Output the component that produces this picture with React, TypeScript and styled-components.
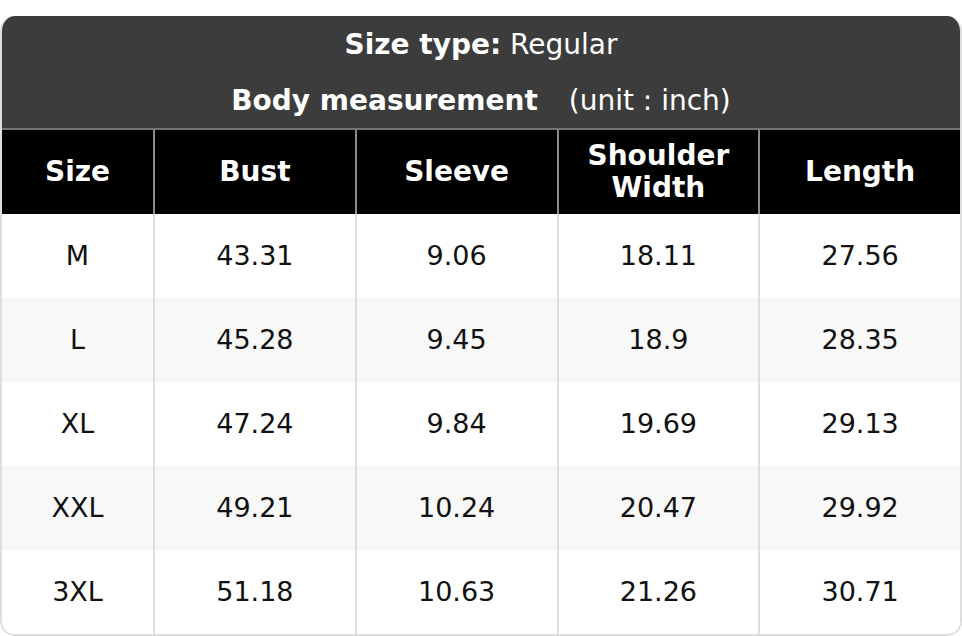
import React from "react";
import styled, { createGlobalStyle } from "styled-components";

const Global = createGlobalStyle`
  html, body { margin: 0; padding: 0; background: #ffffff; }
  body { font-family: "DejaVu Sans", "Liberation Sans", sans-serif; }
`;

const Page = styled.div`
  padding-top: 16px;
`;

const Card = styled.div`
  width: 962px;
  box-sizing: border-box;
  border-radius: 15px;
  overflow: hidden;
  border: 2px solid #dedede;
  border-top: none;
  background: #ffffff;
`;

const Banner = styled.div`
  background: #3c3c3c;
  color: #ffffff;
  display: flex;
  flex-direction: column;
  margin: 0 -2px;
`;

const BannerLine = styled.div`
  height: 56px;
  display: flex;
  align-items: center;
  justify-content: center;
  font-size: 28px;
  white-space: pre;
`;

const Strong = styled.span`
  font-weight: bold;
`;

const Unit = styled.span`
  margin-left: 31px;
`;

const Grid = styled.div`
  display: grid;
  grid-template-columns: 153px repeat(4, 1fr);
  border-top: 2px solid #747474;
  margin: 0 -2px 0 -2px;
  padding: 0 0 0 2px;
`;

const HeadCell = styled.div<{ $last?: boolean }>`
  background: #000000;
  color: #ffffff;
  font-weight: bold;
  font-size: 28px;
  line-height: 32px;
  height: 84px;
  display: flex;
  align-items: center;
  justify-content: center;
  text-align: center;
  border-right: 2px solid ${(p) => (p.$last ? "#dedede" : "#8a8a8a")};
  box-sizing: border-box;
`;

const Cell = styled.div<{ $alt: boolean; $last?: boolean }>`
  background: ${(p) => (p.$alt ? "#f8f8f8" : "#ffffff")};
  color: #111111;
  font-size: 27px;
  height: 84px;
  padding-bottom: 2px;
  display: flex;
  align-items: center;
  justify-content: center;
  border-right: 2px solid ${(p) => (p.$last ? "transparent" : "#dedede")};
  box-sizing: border-box;
`;

const headers = ["Size", "Bust", "Sleeve", "Shoulder\nWidth", "Length"];
const rows = [
  ["M", "43.31", "9.06", "18.11", "27.56"],
  ["L", "45.28", "9.45", "18.9", "28.35"],
  ["XL", "47.24", "9.84", "19.69", "29.13"],
  ["XXL", "49.21", "10.24", "20.47", "29.92"],
  ["3XL", "51.18", "10.63", "21.26", "30.71"],
];

const Lines = styled.span`
  white-space: pre-line;
`;

export default function App() {
  return (
    <Page>
      <Global />
      <Card>
        <Banner>
          <BannerLine>
            <Strong>Size type:</Strong> Regular
          </BannerLine>
          <BannerLine>
            <Strong>Body measurement</Strong>
            <Unit>(unit : inch)</Unit>
          </BannerLine>
        </Banner>
        <Grid>
          {headers.map((h, i) => (
            <HeadCell key={h} $last={i === headers.length - 1}>
              <Lines>{h}</Lines>
            </HeadCell>
          ))}
          {rows.map((r, ri) =>
            r.map((v, ci) => (
              <Cell key={`${ri}-${ci}`} $alt={ri % 2 === 1} $last={ci === r.length - 1}>
                {v}
              </Cell>
            ))
          )}
        </Grid>
      </Card>
    </Page>
  );
}
